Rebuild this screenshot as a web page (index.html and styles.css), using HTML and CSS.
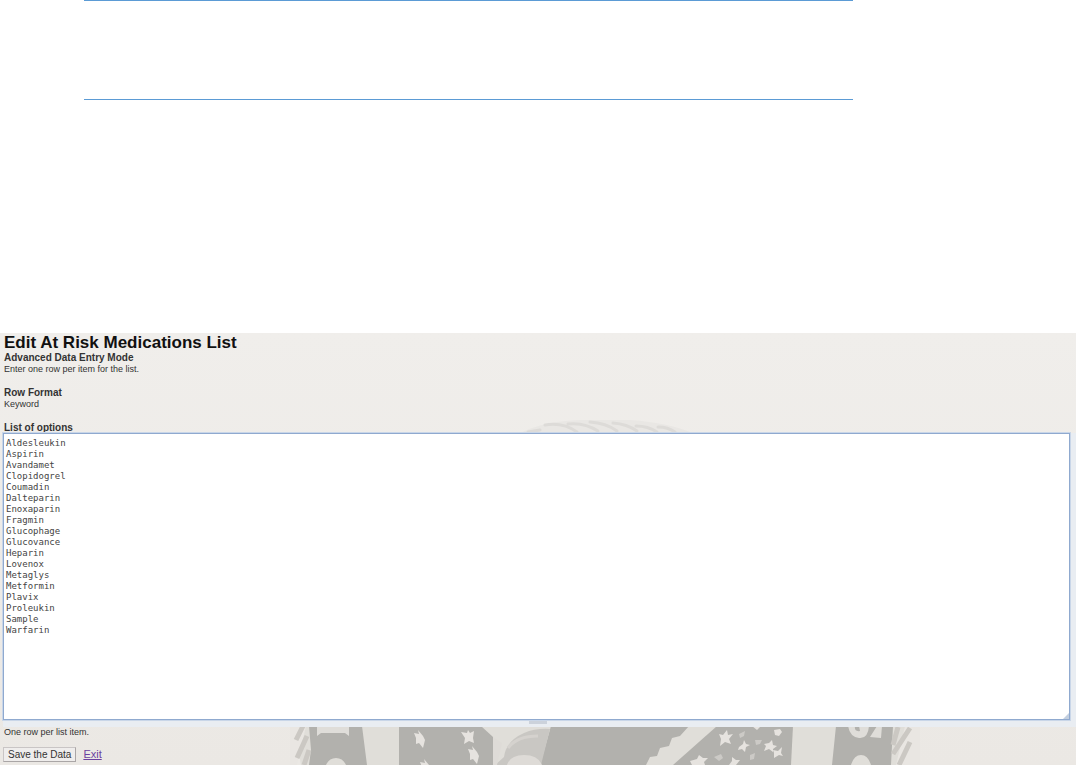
FILE: index.html
```html
<!DOCTYPE html>
<html lang="en">
<head>
<meta charset="utf-8">
<title>Edit At Risk Medications List</title>
<link rel="stylesheet" href="styles.css">
</head>
<body>
<header class="page-rules"></header>
<main class="panel">
  <svg class="seal" viewBox="290 333 630 432" aria-hidden="true">
    <path fill="#e9e7e4" d="M520 433q25-12 60-13h50q40 3 62 13z"/>
    <g fill="none" stroke="#dddbd8" stroke-width="3" stroke-linecap="round">
      <path d="M545 425q18-3 32 7M568 424q16-2 30 7M590 422q16 1 27 9M613 423q14 1 24 8M636 426q12 0 21 6M658 427q10 0 17 5M528 432l12-2"/>
    </g>
    <path fill="#e0ded9" d="M294 726h618l-4 39H301z"/>
    <path fill="#e9e6e2" d="M290 726h16l-9 39h-7zM905 726h15v39h-24z"/>
    <g fill="#b2b1ad">
      <path d="M309 726h53l5 39h-21q-3-7-10-7t-10 7h-17l2-15z"/>
      <path d="M399 726h82l12 11v28h-94z"/>
      <path d="M551 726h138l-9 10-8 2-3 8-9 2-3 8-7 1-4 8H540z"/>
      <path d="M717 726h76l-2 39H673z"/>
      <path d="M836 726h57l-2 39h-20q-3-10-10-10t-10 10h-19z"/>
    </g>
    <path fill="#dfddd9" d="M317 726h32v10l-4-3h-24l-4 3zM848 726h7q-1 6 5 5l-1-5h10q-1 13-10 12t-11-12zM870 737l7-11h5l-1 12z"/>
    <path fill="none" stroke="#cbc8c3" stroke-width="5" d="M303 726l-7 14M307 736l-10 22M309 750l-5 15M898 727l-5 18M910 728l-17 26M910 742l-11 23"/>
    <path fill="#c9c7c3" d="M504 757q2-16 20-24 12-5 26-4l-9 36h-46z"/>
    <path fill="#dedbd7" d="M493 737l9 6-5 22h-4zM507 765q3-10 17-10t18 10z"/>
    <path fill="none" stroke="#d5d2ce" stroke-width="3" d="M508 748q9-12 30-12"/>
    <g fill="#e6e3df">
      <path id="star" d="M414 733l5 1-1-4 5 6 2 4-2 8-4-5-3 1v-6z"/>
      <path d="M461 732l6 1 1-3 2 3 4-2-1 7 1 5-5-2-5 3 1-6z"/>
      <use href="#star" x="54" y="16"/>
      <use href="#star" x="6" y="29"/>
      <path d="M719 734l4 1 4-5 1 5 5-1-4 5 2 5-6-2-5 4 1-7zM739 747l4-3 1-4 2 4 4 1-4 2-1 5-3-3-4 1zM764 744l5-1 3-3 1 5 4 1-4 3v3l-4-3-5 2 2-5zM773 750l5 1 4-4-1 6 2 3-4-1-5 3v-5zM774 730l6-1 2 3-3 4-4-1zM690 761l7-2 2-4 4 3h5l-4 4 1 3h-13zM729 765l3-4v-4l4 3h4l-4 5zM752 726h9l-4 4z"/>
      <path opacity=".5" d="M739 734l6-3-1 5-4 2zM755 740h7l-2 4-4 1zM714 757l7-3 2 4-4 3zM750 755l5-2-1 6-4 1z"/>
    </g>
  </svg>
  <form class="editor">
    <h1 class="title">Edit At Risk Medications List</h1>
    <h2 class="label">Advanced Data Entry Mode</h2>
    <p class="note">Enter one row per item for the list.</p>
    <h2 class="label section">Row Format</h2>
    <p class="note">Keyword</p>
    <label class="label section" for="options">List of options</label>
    <div class="field">
      <textarea class="options" id="options" rows="25" spellcheck="false">Aldesleukin
Aspirin
Avandamet
Clopidogrel
Coumadin
Dalteparin
Enoxaparin
Fragmin
Glucophage
Glucovance
Heparin
Lovenox
Metaglys
Metformin
Plavix
Proleukin
Sample
Warfarin</textarea>
      <span class="grip"></span>
      <svg class="corner" viewBox="0 0 6 6" aria-hidden="true"><path d="M6 0v6H0z"/></svg>
    </div>
    <p class="note">One row per list item.</p>
    <div class="actions">
      <button class="save" type="button">Save the Data</button>
      <a class="exit" href="#">Exit</a>
    </div>
  </form>
</main>
</body>
</html>
```
FILE: styles.css
```css
* {
  box-sizing: border-box;
}

body {
  margin: 0;
  background: #fff;
  color: #333;
  font-family: "Liberation Sans", Arial, sans-serif;
}

.page-rules {
  height: 100px;
  margin: 0 21% 0 84px;
  border-top: 1px solid #5b9bd5;
  border-bottom: 1px solid #5b9bd5;
}

.panel {
  position: relative;
  margin: 233px 4px 14px 0;
  background: linear-gradient(#f0eeeb, #ebe8e4);
}

.seal {
  position: absolute;
  top: 0;
  left: 290px;
  width: 630px;
  height: 432px;
}

.editor {
  position: relative;
  display: flex;
  flex-direction: column;
  padding: 0 0 3px 3px;
}

.title,
.label,
.note {
  margin: 0;
  padding-left: 1px;
}

.title {
  font-size: 17px;
  line-height: 19px;
  color: #111;
}

.label {
  font-size: 10px;
  font-weight: bold;
  line-height: 12px;
}

.note {
  font-size: 9px;
  line-height: 11px;
}

.section {
  margin-top: 12px;
}

.label[for] {
  line-height: 11px;
}

.field {
  position: relative;
  display: flex;
  padding: 0 6px 7px 0;
  background: #e9edf2;
}

.options {
  flex: 1;
  height: 287px;
  margin: 0;
  padding: 4px 2px;
  border: 1px solid #8fa9cf;
  outline: 1px solid #c9d6e8;
  background: #fff;
  color: #444;
  font-family: "DejaVu Sans Mono", monospace;
  font-size: 9px;
  line-height: 11px;
  resize: none;
}

.grip {
  position: absolute;
  bottom: 3px;
  left: 49%;
  width: 18px;
  height: 3px;
  background: #ccd2db;
}

.corner {
  position: absolute;
  right: 7px;
  bottom: 8px;
  width: 6px;
  height: 6px;
  fill: #c3cfdf;
}

.actions {
  display: flex;
  align-items: center;
  gap: 7px;
  margin-top: 9px;
}

.save {
  height: 15px;
  padding: 0 4px;
  border: 1px solid #c9c5c5;
  border-right-color: #aaa6a6;
  border-bottom-color: #aaa6a6;
  background: #efedec;
  color: #333;
  font-family: inherit;
  font-size: 10px;
  line-height: 13px;
}

.exit {
  color: #6b3fa0;
  font-size: 11px;
  line-height: 13px;
}
```
